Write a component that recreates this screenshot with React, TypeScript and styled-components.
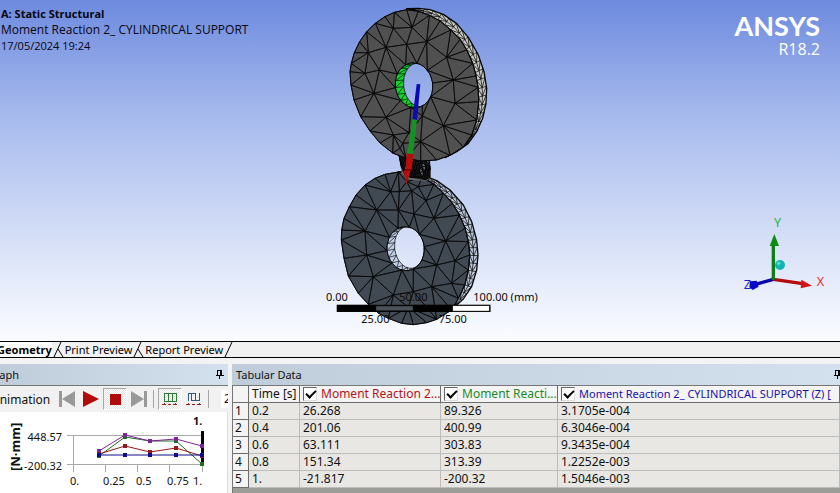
import React from "react";
import styled, { createGlobalStyle, css } from "styled-components";

const GlobalStyle = createGlobalStyle`
  * { box-sizing: border-box; }
  html, body, #root { height: 100%; margin: 0; }
  body {
    overflow: hidden;
    background: #f3f3f3;
    color: #111;
    font: 12px/17px "Noto Sans", "Segoe UI", sans-serif;
  }
`;

/* ---------- mesh geometry ---------- */

type Pt = [number, number];

/* Bowyer-Watson triangulation */
function triangulate(points: Pt[]): number[][] {
  const n = points.length;
  const all: Pt[] = [...points, [-9000, -9000], [9000, -9000], [0, 12000]];
  let tris: number[][] = [[n, n + 1, n + 2]];
  for (let i = 0; i < n; i++) {
    const [px, py] = all[i];
    const edges: number[][] = [];
    tris = tris.filter((t) => {
      const [[ax, ay], [bx, by], [cx, cy]] = t.map((k) => all[k]);
      const d = 2 * (ax * (by - cy) + bx * (cy - ay) + cx * (ay - by));
      if (d === 0) return false;
      const a2 = ax * ax + ay * ay;
      const b2 = bx * bx + by * by;
      const c2 = cx * cx + cy * cy;
      const ux = (a2 * (by - cy) + b2 * (cy - ay) + c2 * (ay - by)) / d;
      const uy = (a2 * (cx - bx) + b2 * (ax - cx) + c2 * (bx - ax)) / d;
      const inside = (px - ux) ** 2 + (py - uy) ** 2 < (ax - ux) ** 2 + (ay - uy) ** 2;
      if (inside) edges.push([t[0], t[1]], [t[1], t[2]], [t[2], t[0]]);
      return !inside;
    });
    edges
      .filter((e) => edges.filter((f) => (f[0] === e[0] && f[1] === e[1]) || (f[0] === e[1] && f[1] === e[0])).length === 1)
      .forEach((e) => tris.push([e[0], e[1], i]));
  }
  return tris.filter((t) => t.every((k) => k < n));
}

const join = (pts: Pt[]) => pts.map((p) => p.join(" ")).join("L");

function meshPath(points: Pt[]): string {
  return triangulate(points)
    .map((t) => `M${join(t.map((k) => points[k]))}Z`)
    .join("");
}

function ring(cx: number, cy: number, rx: number, ry: number, turn: number, count: number): Pt[] {
  return Array.from({ length: count }, (_, i) => {
    const a = (i / count) * Math.PI * 2;
    const x = rx * Math.cos(a);
    const y = ry * Math.sin(a);
    return [
      Math.round(cx + x * Math.cos(turn) - y * Math.sin(turn)),
      Math.round(cy + x * Math.sin(turn) + y * Math.cos(turn)),
    ] as Pt;
  });
}

/* Evenly spaced points along a polyline */
function resample(line: Pt[], count: number): Pt[] {
  const lens = line.slice(1).map((p, i) => Math.hypot(p[0] - line[i][0], p[1] - line[i][1]));
  const total = lens.reduce((a, b) => a + b, 0);
  return Array.from({ length: count }, (_, i) => {
    let rest = (total * i) / (count - 1);
    let k = 0;
    while (k < lens.length - 1 && rest > lens[k]) rest -= lens[k++];
    const f = rest / lens[k];
    return [line[k][0] + (line[k + 1][0] - line[k][0]) * f, line[k][1] + (line[k + 1][1] - line[k][1]) * f] as Pt;
  });
}

function stripPath(inner: Pt[], outer: Pt[], count: number): string {
  const a = resample(inner, count);
  const c = resample(outer, count);
  const b = a.map((p, i) => [(p[0] + c[i][0]) / 2, (p[1] + c[i][1]) / 2] as Pt);
  let d = `M${join(b)}`;
  for (let i = 0; i < count - 1; i++) {
    d += `M${join([a[i], b[i], c[i]])}M${join([a[i], b[i + 1]])}M${join([c[i], b[i + 1]])}`;
  }
  return d;
}

interface DiscShape {
  face: Pt[];
  side: Pt[];
  sideInner: Pt[];
  nodes: Pt[];
  hole: [number, number, number, number, number];
  opening: [number, number, number, number, number];
  faceFill: string;
  sideFill: string;
  rimFill: string;
}

/* Disc coordinates are thirds of a pixel. */
const upperDisc: DiscShape = {
  face: [[60, 215], [63, 255], [72, 300], [92, 350], [120, 393], [150, 429], [188, 459], [228, 475], [272, 483], [320, 480], [360, 466], [400, 441], [425, 405], [440, 360], [446, 305], [444, 262], [438, 228], [428, 190], [410, 150], [390, 118], [362, 90], [330, 63], [298, 46], [265, 34], [230, 29], [193, 37], [165, 50], [136, 70], [110, 95], [89, 125], [73, 158], [64, 190]],
  side: [[230, 26], [265, 25], [300, 29], [340, 43], [380, 71], [415, 112], [445, 165], [462, 215], [470, 265], [468, 310], [458, 355], [440, 395], [415, 430], [380, 455], [345, 473]],
  sideInner: [[230, 29], [265, 34], [298, 46], [330, 63], [362, 90], [390, 118], [410, 150], [428, 190], [438, 228], [444, 262], [446, 305], [440, 360], [425, 405], [400, 441], [345, 473]],
  nodes: [[190, 85], [246, 82], [168, 142], [115, 158], [230, 133], [290, 125], [105, 220], [148, 210], [350, 172], [132, 280], [370, 240], [375, 310], [340, 377], [277, 348], [168, 352], [190, 405], [237, 398], [218, 430], [272, 425], [210, 445]],
  hole: [252, 256, 56, 68, -0.12],
  opening: [265, 255, 44, 65, -0.12],
  faceFill: "#505050",
  sideFill: "#c6c6c2",
  rimFill: "#15d32b",
};

const lowerDisc: DiscShape = {
  face: [[34, 720], [35, 690], [42, 655], [58, 620], [78, 585], [105, 555], [135, 535], [165, 523], [205, 516], [240, 520], [275, 532], [312, 553], [340, 580], [367, 610], [388, 645], [405, 685], [415, 725], [419, 765], [415, 810], [404, 855], [385, 895], [365, 930], [320, 958], [290, 968], [250, 974], [215, 970], [175, 955], [146, 940], [115, 913], [85, 880], [55, 828], [42, 775]],
  side: [[205, 516], [250, 518], [285, 528], [320, 542], [360, 570], [400, 615], [425, 665], [440, 720], [444, 765], [440, 810], [425, 860], [400, 897], [360, 933]],
  sideInner: [[205, 516], [240, 520], [275, 532], [312, 553], [340, 580], [367, 610], [388, 645], [405, 685], [415, 725], [419, 765], [415, 810], [404, 855], [385, 895], [360, 933]],
  nodes: [[182, 575], [140, 630], [208, 575], [245, 572], [288, 602], [205, 630], [252, 642], [312, 655], [105, 693], [110, 765], [347, 723], [375, 782], [130, 830], [305, 860], [365, 850], [320, 795], [190, 885], [250, 875], [235, 922], [265, 560], [230, 545]],
  hole: [227, 746, 56, 66, -0.1],
  opening: [238, 742, 44, 63, -0.12],
  faceFill: "#414952",
  sideFill: "#bcc8da",
  rimFill: "#c0cfe8",
};

/* Tightly meshed joint between the discs */
const jointNodes: Pt[] = Array.from({ length: 95 }, (_, i) => {
  const u = (i * 0.618034) % 1;
  const v = (i * 0.754878) % 1;
  return [203 + v * 16 + u * (98 - v * 16), 448 + v * 80 + u * 16] as Pt;
});

function Disc({ shape }: { shape: DiscShape }) {
  const hole = ring(...shape.hole, 10);
  const smoothHole = ring(...shape.hole, 28);
  const opening = ring(...shape.opening, 28);
  const body = `M${join(shape.face)}ZM${join(smoothHole)}Z`;
  const pts = [...shape.face, ...shape.nodes, ...hole];
  const lines = triangulate(pts)
    .filter((t) => !t.every((k) => k >= pts.length - hole.length))
    .map((t) => {
      const [a, b, c] = t.map((k) => pts[k]);
      const rim = t.map((k) => k >= pts.length - hole.length);
      const edges: string[] = [];
      if (!(rim[0] && rim[1])) edges.push(`M${join([a, b])}`);
      if (!(rim[1] && rim[2])) edges.push(`M${join([b, c])}`);
      if (!(rim[2] && rim[0])) edges.push(`M${join([c, a])}`);
      return edges.join("");
    })
    .join("");
  const sideArea = [...shape.side, ...[...shape.sideInner].reverse()];
  const rimOuter = ring(...shape.hole, 20);
  const rimInner = ring(...shape.opening, 20);
  return (
    <g fill="none" stroke="#070707" strokeWidth="2.2" strokeLinejoin="round">
      <path d={`M${join(sideArea)}Z`} fill={shape.sideFill} strokeWidth="4" />
      <path d={stripPath(shape.sideInner, shape.side, 25)} />
      <path d={`M${join(smoothHole)}ZM${join(opening)}Z`} fill={shape.rimFill} fillRule="evenodd" />
      <path
        d={rimOuter.map((p, i) => (p[0] < shape.hole[0] + 8 ? `M${join([p, rimInner[i]])}M${join([p, rimInner[(i + 1) % 20]])}` : "")).join("")}
        strokeWidth="2"
      />
      <path d={body} fill={shape.faceFill} fillRule="evenodd" strokeWidth="3" />
      <path d={lines} />
    </g>
  );
}

/* ---------- viewport ---------- */

const Workbench = styled.div`
  display: flex;
  flex-direction: column;
  height: 100vh;
  overflow: hidden;
`;

const Viewport = styled.main`
  position: relative;
  flex: 1;
  min-height: 0;
  overflow: hidden;
  background: linear-gradient(#6d8ade 0%, #a5b9ed 33%, #d0dbf6 66%, #fbfcff 100%);
`;

const Caption = styled.header`
  position: absolute;
  top: 6px;
  left: 1px;
  color: #06060f;
`;

const CaptionTitle = styled.h1`
  margin: 0;
  font: 700 11px/16px "Open Sans", sans-serif;
`;

const CaptionLine = styled.div<{ $small?: boolean }>`
  font: ${(p) => (p.$small ? "11px" : "12px")}/16px "Open Sans", sans-serif;
`;

const Brand = styled.div`
  position: absolute;
  top: 12px;
  right: 20px;
  text-align: right;
  color: #fff;
`;

const BrandName = styled.div`
  font: 700 27px/28px "Lato", sans-serif;
`;

const BrandVersion = styled.div`
  font: 400 16px/18px "Open Sans", sans-serif;
`;

const Model = styled.svg`
  position: absolute;
  top: 0;
  left: calc(50% - 90px);
  width: 220px;
  height: 330px;
  overflow: visible;
`;

const Triad = styled.svg`
  position: absolute;
  right: 0;
  bottom: 41px;
  width: 110px;
  height: 90px;
`;

function ModelView() {
  return (
    <Model viewBox="0 0 660 990" role="img" aria-label="Meshed gear pair">
      <Disc shape={lowerDisc} />
      <path d="M203 450L300 470L303 530L290 542L240 540L215 520Z" fill="#66686b" />
      <path d={meshPath(jointNodes)} fill="none" stroke="#050505" strokeWidth="2.4" />
      <Disc shape={upperDisc} />
      <path d="M260 252L271 253L261 360L247 358Z" fill="#0b0bb4" />
      <path d="M247 358L261 360L249 462L232 461Z" fill="#159321" />
      <path d="M230 461L250 462L245 512L242 512L228 556L221 510L226 510Z" fill="#b90d0b" />
      <path d="M222 510H245" stroke="#5b0505" strokeWidth="4" />
      <g stroke="#000" strokeWidth="3">
        <rect x="22" y="916" width="458" height="18" fill="none" />
        <rect x="22" y="916" width="115" height="18" />
        <rect x="250" y="916" width="116" height="18" />
        <rect x="367" y="916" width="112" height="18" fill="#fff" />
        <path d="M137 917H250V933H137Z" fill="#49515a" />
      </g>
      <g fill="#0a0a0a" fontFamily="Noto Sans, sans-serif" fontSize="33">
        <text x="-12" y="904">0.00</text>
        <text x="208" y="904">50.00</text>
        <text x="430" y="904">100.00 (mm)</text>
        <text x="94" y="968">25.00</text>
        <text x="326" y="968">75.00</text>
      </g>
    </Model>
  );
}

function AxisTriad() {
  return (
    <Triad viewBox="0 0 330 270" role="img" aria-label="Axis triad">
      <path d="M130 208L72 224" stroke="#0707a8" strokeWidth="10" />
      <path d="M60 214L80 212L86 230L68 240L58 232Z" fill="#0909c8" />
      <path d="M130 208L218 221" stroke="#b40c0c" strokeWidth="10" />
      <path d="M214 209L246 227L212 235Z" fill="#d01616" />
      <path d="M130 210V104" stroke="#0d7d14" strokeWidth="10" />
      <path d="M133 72L147 108H119Z" fill="#0b8a14" />
      <circle cx="150" cy="165" r="15" fill="#12b5b5" />
      <circle cx="146" cy="160" r="5" fill="#5ce0dc" />
      <g fontFamily="Noto Sans, sans-serif" fontSize="38">
        <text x="132" y="52" fill="#2bb34a">Y</text>
        <text x="260" y="229" fill="#e03030">X</text>
        <text x="41" y="237" fill="#1c1cc8">Z</text>
      </g>
    </Triad>
  );
}

/* ---------- tabs ---------- */

const TabBar = styled.nav`
  display: flex;
  flex: none;
  height: 17px;
  border-top: 1px solid #000;
  border-bottom: 1px solid #000;
  background: #f1f1f1;
`;

const Tab = styled.button<{ $active?: boolean }>`
  flex: none;
  padding: 0;
  border: 0;
  background: ${(p) => (p.$active ? "#fff" : "transparent")};
  color: #000;
  font: 11px/15px "Noto Sans", sans-serif;
  white-space: nowrap;
  ${(p) =>
    p.$active &&
    css`
      margin-left: -3px;
      font-weight: 700;
    `}
`;

const TabEdge = styled.svg`
  flex: none;
  width: 13px;
  height: 15px;
  stroke: #000;
  fill: none;
`;

/* ---------- panels ---------- */

const Panels = styled.div`
  display: flex;
  flex: none;
  gap: 4px;
  height: 135px;
  padding-top: 6px;
`;

const Panel = styled.section<{ $wide?: boolean }>`
  display: flex;
  flex-direction: column;
  min-width: 0;
  overflow: hidden;
  ${(p) => (p.$wide ? "flex: 1;" : "flex: none; width: 228px;")}
`;

const PanelHeader = styled.header`
  display: flex;
  flex: none;
  align-items: center;
  justify-content: space-between;
  height: 22px;
  padding-left: 4px;
  border-bottom: 1px solid #777;
  background: linear-gradient(90deg, #bfcddb, #d3e1ee);
`;

const PanelTitle = styled.h2<{ $clipped?: boolean }>`
  margin: 0 0 0 ${(p) => (p.$clipped ? "-17px" : "0")};
  font-size: 11px;
  line-height: 20px;
  font-weight: 400;
`;

const PinButton = styled.button<{ $clipped?: boolean }>`
  width: 9px;
  height: 12px;
  margin-right: ${(p) => (p.$clipped ? "-2px" : "4px")};
  padding: 0;
  border: 0;
  background: none;
  line-height: 0;
`;

function Pin({ clipped }: { clipped?: boolean }) {
  return (
    <PinButton $clipped={clipped} aria-label="Auto hide">
      <svg width="9" height="10" viewBox="0 0 9 10" shapeRendering="crispEdges">
        <path d="M2 0H7V5H9V6H5V9H4V6H1V5H2ZM3 1V5H5V1Z" fillRule="evenodd" />
      </svg>
    </PinButton>
  );
}

const Toolbar = styled.div`
  display: flex;
  flex: none;
  align-items: center;
  height: 26px;
  overflow: hidden;
  background: #f1f1f1;
`;

const ToolbarLabel = styled.span`
  flex: none;
  width: 63px;
  margin-left: -8px;
  white-space: nowrap;
`;

const ToolButton = styled.button<{ $pressed?: boolean }>`
  display: grid;
  flex: none;
  place-items: center;
  width: 24px;
  height: 22px;
  padding: 0;
  border: 1px solid;
  border-color: ${(p) => (p.$pressed ? "#a8a8a8 #fff #fff #a8a8a8" : "transparent")};
  background: ${(p) => (p.$pressed ? "repeating-conic-gradient(#fff 0 25%, #e4e4e4 0 50%) 0 0 / 2px 2px" : "none")};
`;

const Divider = styled.span`
  flex: none;
  width: 1px;
  height: 18px;
  margin: 0 4px 0 2px;
  background: #a5a5a5;
`;

const Sliver = styled.span`
  flex: none;
  width: 12px;
  height: 18px;
  margin-left: 8px;
  padding-left: 3px;
  background: #fff;
`;

const ChartArea = styled.div`
  flex: 1;
  min-height: 0;
  border-right: 1px solid #ddd;
  background: #fff;
`;

function FramesIcon() {
  return (
    <svg width="16" height="14" viewBox="0 0 16 14" shapeRendering="crispEdges" fill="none">
      <path d="M2 1.500H15M2 9.500H15M2.500 1V10M6.500 1V10M10.500 1V10M14.500 1V10" stroke="#2f7a36" />
      <path d="M0 12.500H4M6 12.500H9M11 12.500H15M2.500 11V13M13.500 11V13" stroke="#8c2020" />
    </svg>
  );
}

function ColumnsIcon() {
  return (
    <svg width="16" height="14" viewBox="0 0 16 14" shapeRendering="crispEdges" fill="none">
      <path d="M2.500 1V9M5.500 1V9M9.500 1V9M13.500 1V9M2 1.500H9M5 8.500H14" stroke="#2c558c" />
      <path d="M0 12.500H4M6 12.500H9M11 12.500H15M2.500 11V13M13.500 11V13" stroke="#8c2020" />
    </svg>
  );
}

const series = [
  { color: "#206c24", pts: [[99, 51], [125, 32], [150, 36], [176, 36], [202, 59]] },
  { color: "#7c2594", pts: [[99, 46], [125, 30], [150, 36], [176, 34], [202, 41]] },
  { color: "#95181c", pts: [[99, 49], [125, 41], [150, 47], [176, 43], [202, 51]] },
  { color: "#0c0c8c", pts: [[99, 50], [125, 50], [150, 50], [176, 50], [202, 50]] },
];

function Chart() {
  return (
    <svg width="227" height="81" viewBox="0 7 227 81" role="img" aria-label="Moment reaction over time">
      <path d="M67 30.500H202M67 59.500H202M73.500 30V67M105.500 60V67M137.500 60V67M169.500 60V67M202.500 60V67" stroke="#a9a9a9" fill="none" shapeRendering="crispEdges" />
      <path d="M202.500 26V60" stroke="#000" strokeWidth="3" />
      {series.map((s) => (
        <g key={s.color} fill={s.color}>
          <polyline points={s.pts.join(" ")} fill="none" stroke={s.color} />
          {s.pts.map(([x, y]) => (
            <rect key={x} x={x - 2} y={y - 2} width="4" height="4" />
          ))}
        </g>
      ))}
      <g fontFamily="Noto Sans, sans-serif" fontSize="11" fill="#111">
        <text x="62" y="36" textAnchor="end">448.57</text>
        <text x="62" y="65" textAnchor="end">-200.32</text>
        <text x="70" y="80">0.</text>
        <text x="103" y="80">0.25</text>
        <text x="136" y="80">0.5</text>
        <text x="167" y="80">0.75</text>
        <text x="193" y="80">1.</text>
        <text x="193" y="20" fontWeight="700">1.</text>
        <text transform="translate(20 66) rotate(-90)" fontSize="13" fontWeight="700">[N·mm]</text>
      </g>
    </svg>
  );
}

/* ---------- table ---------- */

const TableArea = styled.div`
  flex: 1;
  min-height: 0;
  overflow: hidden;
  border-left: 1px solid #777;
  background: #9c9c99;
`;

const Table = styled.table`
  width: 100%;
  border-collapse: separate;
  border-spacing: 0;
  table-layout: fixed;
`;

const HeadCell = styled.th<{ $color?: string; $small?: boolean }>`
  height: 17px;
  padding: 0 0 0 3px;
  overflow: hidden;
  border-right: 1px solid #6d6d6d;
  border-bottom: 1px solid #6d6d6d;
  background: #f4f4f4;
  color: ${(p) => p.$color ?? "#111"};
  font-size: ${(p) => (p.$small ? "11px" : "12px")};
  font-weight: 400;
  line-height: 16px;
  text-align: left;
  white-space: nowrap;
`;

const RowHead = styled(HeadCell)`
  padding-left: 2px;
`;

const Cell = styled.td`
  height: 17px;
  padding: 0 0 0 3px;
  border-right: 1px solid #bdbdbb;
  border-bottom: 1px solid #bdbdbb;
  background: #e8e7e4;
  line-height: 16px;
`;

const ColumnToggle = styled.label`
  display: flex;
  align-items: center;
  gap: 4px;
`;

const Check = styled.input`
  appearance: none;
  flex: none;
  width: 14px;
  height: 14px;
  margin: 0;
  border: 1px solid;
  border-color: #666 #ddd #ddd #666;
  background: #fff;
  &:checked::after {
    content: "";
    display: block;
    width: 8px;
    height: 4px;
    margin: 2px 0 0 2px;
    border: solid #000;
    border-width: 0 0 2px 2px;
    transform: rotate(-45deg);
  }
`;

const columns = [
  { label: "Moment Reaction 2...", color: "#b5121b" },
  { label: "Moment Reacti...", color: "#1c8a28" },
  { label: "Moment Reaction 2_ CYLINDRICAL SUPPORT (Z) [", color: "#1a10a8", small: true },
];

const rows = [
  ["0.2", "26.268", "89.326", "3.1705e-004"],
  ["0.4", "201.06", "400.99", "6.3046e-004"],
  ["0.6", "63.111", "303.83", "9.3435e-004"],
  ["0.8", "151.34", "313.39", "1.2252e-003"],
  ["1.", "-21.817", "-200.32", "1.5046e-003"],
];

function DataTable() {
  return (
    <Table>
      <colgroup>
        <col width="16" />
        <col width="51" />
        <col width="141" />
        <col width="117" />
        <col />
      </colgroup>
      <thead>
        <tr>
          <HeadCell />
          <HeadCell scope="col">Time [s]</HeadCell>
          {columns.map((c) => (
            <HeadCell key={c.label} scope="col" $color={c.color} $small={c.small}>
              <ColumnToggle>
                <Check type="checkbox" defaultChecked />
                {c.label}
              </ColumnToggle>
            </HeadCell>
          ))}
        </tr>
      </thead>
      <tbody>
        {rows.map((r, i) => (
          <tr key={r[0]}>
            <RowHead scope="row">{i + 1}</RowHead>
            {r.map((v) => (
              <Cell key={v}>{v}</Cell>
            ))}
          </tr>
        ))}
      </tbody>
    </Table>
  );
}

export default function App() {
  return (
    <Workbench>
      <GlobalStyle />
      <Viewport>
        <ModelView />
        <Caption>
          <CaptionTitle>A: Static Structural</CaptionTitle>
          <CaptionLine>Moment Reaction 2_ CYLINDRICAL SUPPORT</CaptionLine>
          <CaptionLine $small>17/05/2024 19:24</CaptionLine>
        </Caption>
        <Brand>
          <BrandName>ANSYS</BrandName>
          <BrandVersion>R18.2</BrandVersion>
        </Brand>
        <AxisTriad />
      </Viewport>
      <TabBar>
        <Tab $active>Geometry</Tab>
        <TabEdge viewBox="0 0 13 15"><path d="M2 15L9 0M6 7L11 15" /></TabEdge>
        <Tab>Print Preview</Tab>
        <TabEdge viewBox="0 0 13 15"><path d="M2 15L9 0M6 7L11 15" /></TabEdge>
        <Tab>Report Preview</Tab>
        <TabEdge viewBox="0 0 13 15"><path d="M2 15L9 0" /></TabEdge>
      </TabBar>
      <Panels>
        <Panel>
          <PanelHeader>
            <PanelTitle $clipped>Graph</PanelTitle>
            <Pin />
          </PanelHeader>
          <Toolbar>
            <ToolbarLabel>Animation</ToolbarLabel>
            <ToolButton aria-label="First frame">
              <svg width="16" height="16" viewBox="0 0 16 16" fill="#999"><path d="M0 0H3V16H0ZM16 0V16L3 8Z" /></svg>
            </ToolButton>
            <ToolButton aria-label="Play">
              <svg width="16" height="16" viewBox="0 0 16 16" fill="#b00c0c"><path d="M0 0L16 8L0 16Z" /></svg>
            </ToolButton>
            <ToolButton $pressed aria-label="Stop">
              <svg width="11" height="11" viewBox="0 0 11 11"><rect width="11" height="11" fill="#b00c0c" /></svg>
            </ToolButton>
            <ToolButton aria-label="Last frame">
              <svg width="16" height="16" viewBox="0 0 16 16" fill="#999"><path d="M13 0H16V16H13ZM0 0V16L13 8Z" /></svg>
            </ToolButton>
            <Divider />
            <ToolButton $pressed aria-label="Distributed"><FramesIcon /></ToolButton>
            <ToolButton aria-label="Result sets"><ColumnsIcon /></ToolButton>
            <Divider />
            <Sliver>2</Sliver>
          </Toolbar>
          <ChartArea><Chart /></ChartArea>
        </Panel>
        <Panel $wide>
          <PanelHeader>
            <PanelTitle>Tabular Data</PanelTitle>
            <Pin clipped />
          </PanelHeader>
          <TableArea><DataTable /></TableArea>
        </Panel>
      </Panels>
    </Workbench>
  );
}
